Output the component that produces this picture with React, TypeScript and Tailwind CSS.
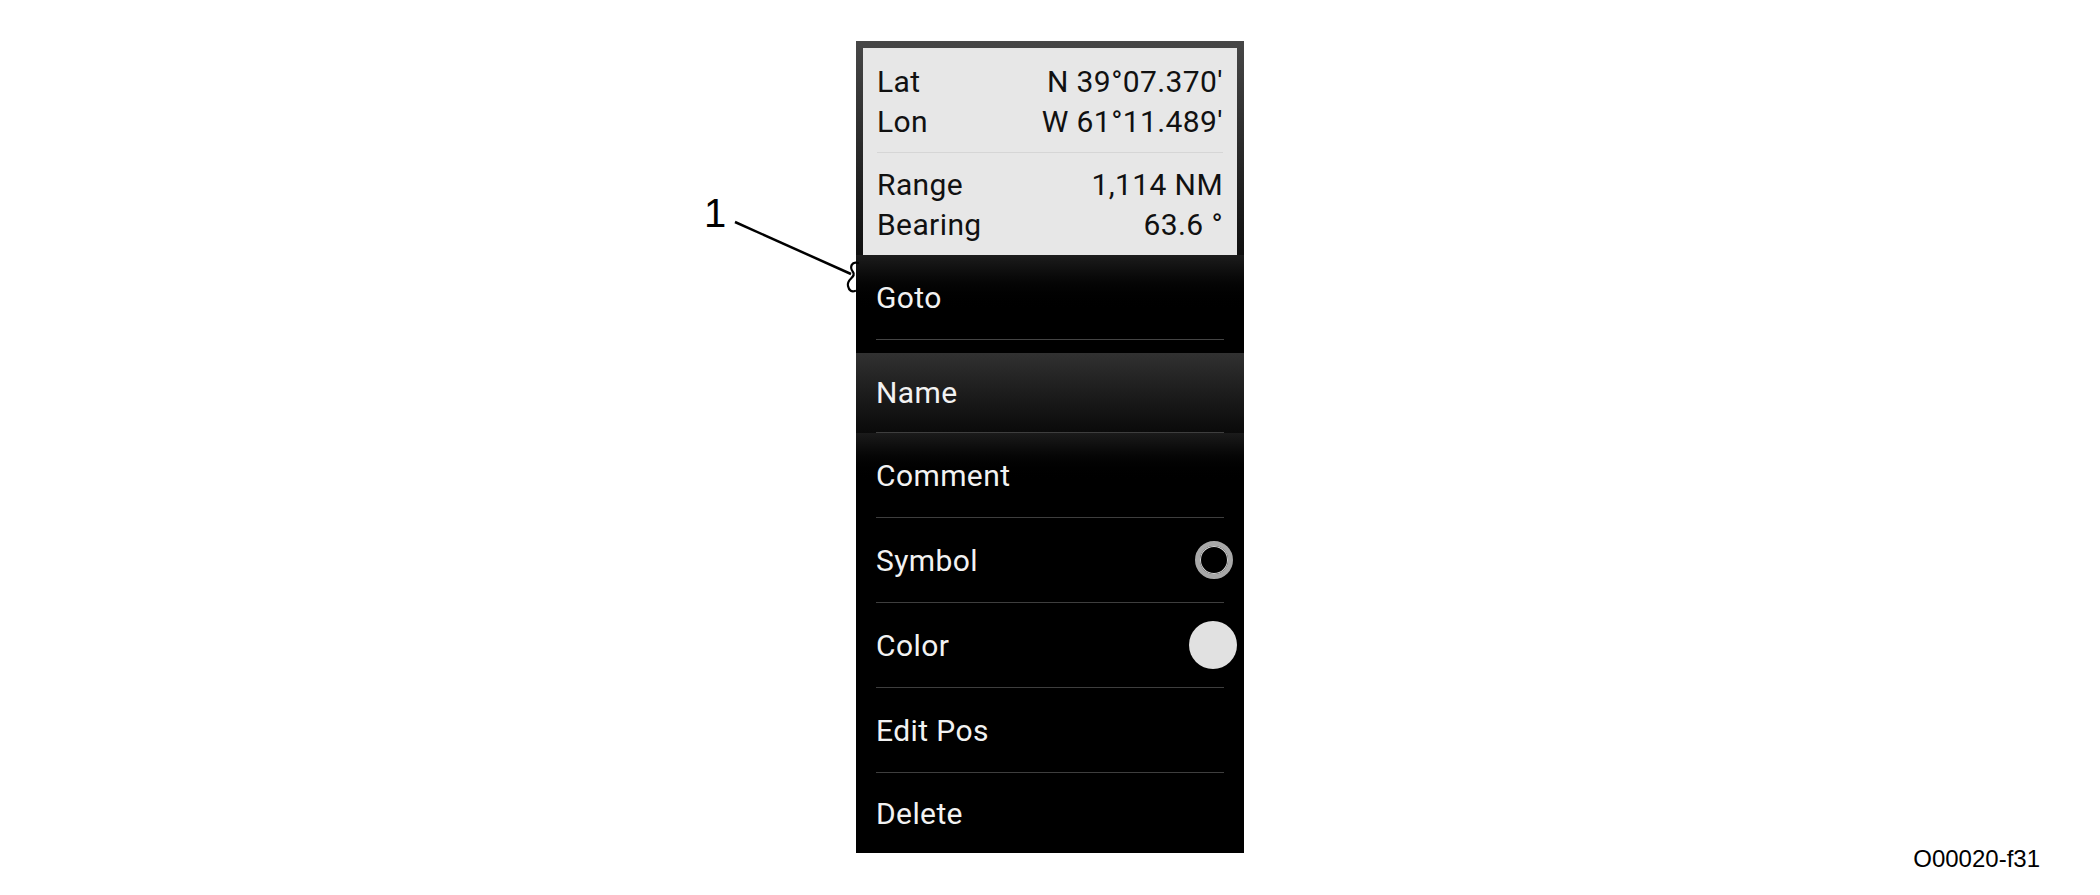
import React from 'react';

interface MenuRow {
  label: string;
  bg: string;
  h: string;
  icon?: 'ring' | 'dot';
  last?: boolean;
}

const rows: MenuRow[] = [
  { label: 'Name', bg: 'bg-linear-to-b from-[#313131] to-[#0a0a0a]', h: 'h-[80px]' },
  { label: 'Comment', bg: 'bg-linear-to-b from-[#1b1b1b] to-black to-60%', h: 'h-[85px]' },
  { label: 'Symbol', bg: 'bg-black', h: 'h-[85px]', icon: 'ring' },
  { label: 'Color', bg: 'bg-black', h: 'h-[85px]', icon: 'dot' },
  { label: 'Edit Pos', bg: 'bg-black', h: 'h-[85px]' },
  { label: 'Delete', bg: 'bg-black', h: 'h-[80px]', last: true },
];

const InfoLine: React.FC<{ label: string; value: string }> = ({ label, value }) => (
  <div className="flex justify-between items-center h-[40px] leading-[40px]">
    <span>{label}</span>
    <span>{value}</span>
  </div>
);

const App: React.FC = () => {
  return (
    <div className="relative flex w-[2100px] h-[895px] bg-white overflow-hidden">
      {/* Callout 1 */}
      <span className="absolute left-[704px] top-[193px] text-[40px] leading-[40px] text-black font-['Liberation_Sans',Arial,sans-serif]">
        1
      </span>
      <svg className="absolute left-[700px] top-[200px]" width="180" height="110" viewBox="700 200 180 110">
        <path d="M735 222 L851 274" stroke="#000" strokeWidth="2.5" fill="none" />
        <path
          d="M858 263 C852 261 849 267 853 272 C857 277 846 279 848 286 C849 291 852 292 855 291"
          stroke="#000"
          strokeWidth="2.2"
          fill="none"
          strokeLinecap="round"
        />
      </svg>

      <div className="w-[856px] shrink-0" />

      {/* Waypoint menu panel */}
      <div className="mt-[41px] w-[388px] h-[812px] shrink-0 flex flex-col bg-black font-['Roboto','Liberation_Sans',sans-serif] text-[30px] tracking-[0.4px]">
        <div className="px-[7px] pt-[7px] bg-linear-to-b from-[#474747] to-[#101010]">
          <div className="bg-[#e7e7e7] text-[#111] px-[14px] pt-[14px] pb-[10px]">
            <InfoLine label="Lat" value="N 39°07.370′" />
            <InfoLine label="Lon" value="W 61°11.489′" />
            <div className="mt-[10px] h-px bg-[#d6d6d6]" />
            <div className="mt-[12px]">
              <InfoLine label="Range" value="1,114 NM" />
              <InfoLine label="Bearing" value="63.6 °" />
            </div>
          </div>
        </div>

        <div className="px-[20px] pb-[13px] bg-linear-to-b from-[#1c1c1c] to-black to-60%">
          <div className="h-[85px] flex items-center border-b border-[#444] text-[#f2f2f2]">Goto</div>
        </div>

        {rows.map((row) => (
          <div key={row.label} className={`px-[20px] ${row.bg}`}>
            <div
              className={`${row.h} flex items-center justify-between text-[#f2f2f2] ${
                row.last ? '' : 'border-b border-[#3e3e3e]'
              }`}
            >
              <span>{row.label}</span>
              {row.icon === 'ring' && (
                <div className="mr-[-9px] w-[38px] h-[38px] rounded-full border-[5px] border-[#a8a8a8] shadow-[inset_0_0_0_1px_#d8d8d8]" />
              )}
              {row.icon === 'dot' && (
                <div className="mr-[-13px] w-[48px] h-[48px] rounded-full bg-[#e1e1e1]" />
              )}
            </div>
          </div>
        ))}
      </div>

      <div className="flex-1 flex flex-col justify-end items-end pr-[60px] pb-[18px]">
        <span className="text-[24px] text-black font-['Liberation_Sans',Arial,sans-serif]">O00020-f31</span>
      </div>
    </div>
  );
};

export default App;
